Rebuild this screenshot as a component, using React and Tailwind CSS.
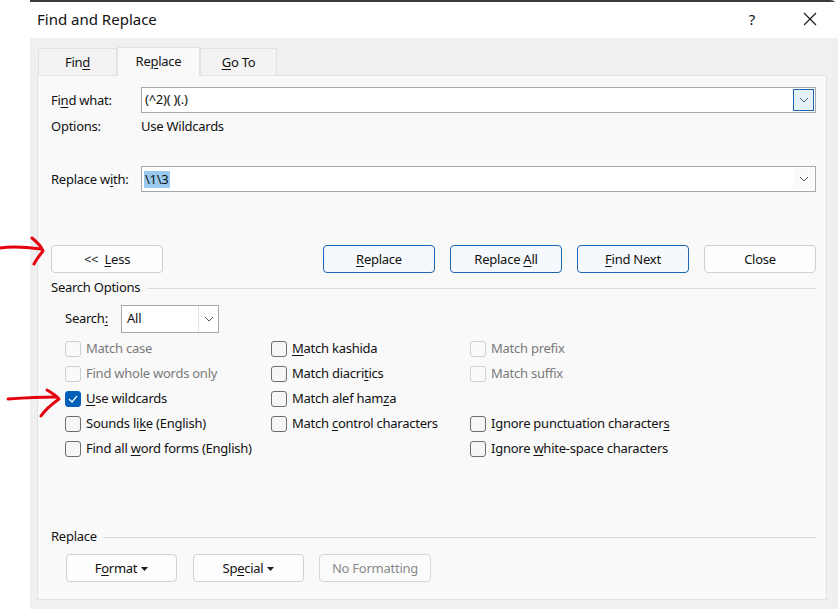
import React from 'react';

const U = ({ children }) => <span className="underline underline-offset-[2px] decoration-1">{children}</span>;

const Chevron = ({ className = '' }) => (
  <svg width="10" height="6" viewBox="0 0 10 6" className={className}>
    <path d="M1 1l4 4 4-4" stroke="#555" strokeWidth="1" fill="none" />
  </svg>
);

const Caret = () => (
  <svg width="7" height="4" viewBox="0 0 7 4" className="ml-[4px]">
    <path d="M0 0h7L3.5 4z" fill="#1a1a1a" />
  </svg>
);

const Btn = ({ children, w = 'w-[112px]', primary, disabled }) => (
  <button
    className={
      'h-[28px] rounded-[4px] border flex items-center justify-center pt-[2px] ' +
      w +
      (primary
        ? ' border-[#1a67b4] bg-[#f5f9fd] text-[#111]'
        : disabled
        ? ' border-[#d6d6d6] bg-[#fbfbfb] text-[#8a8a8a]'
        : ' border-[#d0d0d0] bg-[#fdfdfd] text-[#111]')
    }
  >
    <span className="flex items-center whitespace-pre">{children}</span>
  </button>
);

const Check = ({ children, checked, disabled }) => (
  <div className="h-[25px] flex items-center">
    <div
      className={
        'w-[16px] h-[16px] rounded-[3px] flex items-center justify-center mr-[5px] ' +
        (checked
          ? 'bg-[#005fb8] border border-[#005fb8]'
          : disabled
          ? 'border border-[#cfcfcf] bg-[#fafafa]'
          : 'border border-[#6e6e6e] bg-[#f6f6f6]')
      }
    >
      {checked && (
        <svg width="10" height="8" viewBox="0 0 10 8">
          <path d="M1 4l3 3 5-6" stroke="#fff" strokeWidth="1.2" fill="none" />
        </svg>
      )}
    </div>
    <span className={disabled ? 'text-[#7a7a7a]' : 'text-[#111]'}>{children}</span>
  </div>
);

export default function App() {
  return (
    <div
      className="w-[838px] h-[609px] bg-white relative overflow-hidden flex flex-col text-[13px] tracking-[-0.25px] text-[#111]"
      style={{ fontFamily: '"Noto Sans", "Open Sans", sans-serif' }}
    >
      <div className="ml-[30px] flex-1 flex flex-col border-t-2 border-[#3a3a3a] rounded-tr-[8px]">
        {/* title bar */}
        <div className="h-[36px] bg-white flex items-center pl-[7px] pb-[2px]">
          <span className="text-[15px] tracking-normal">Find and Replace</span>
          <span className="ml-auto text-[15px] mr-[48px]">?</span>
          <svg width="14" height="14" viewBox="0 0 14 14" className="mr-[21px]">
            <path d="M1 1l12 12M13 1L1 13" stroke="#1a1a1a" strokeWidth="1.2" />
          </svg>
        </div>

        {/* body */}
        <div className="flex-1 bg-[#f0f0f0] pl-[7px] pt-[9px]">
          <div className="flex items-end h-[28px] pl-[1px]">
            <div className="w-[79px] h-[27px] border border-b-0 border-[#e2e2e2] bg-[#f3f3f3] flex items-center justify-center pt-[2px]">
              <span>Fin<U>d</U></span>
            </div>
            <div className="w-[83px] h-[29px] -mb-[1px] border border-b-0 border-[#e2e2e2] bg-[#f9f9f9] flex items-center justify-center relative z-10">
              <span>Re<U>p</U>lace</span>
            </div>
            <div className="w-[77px] h-[27px] border border-b-0 border-[#e2e2e2] bg-[#f3f3f3] flex items-center justify-center pt-[2px]">
              <span><U>G</U>o To</span>
            </div>
          </div>

          <div className="w-[790px] h-[525px] border border-[#e2e2e2] bg-[#f9f9f9] pl-[13px] flex flex-col">
            {/* Find what */}
            <div className="flex items-center mt-[11px]">
              <div className="w-[90px] pt-[1px]">Fi<U>n</U>d what:</div>
              <div className="w-[675px] h-[26px] border border-[#a8a8a8] bg-white flex items-center pl-[3px]">
                <span>(^2)( )(.)</span>
                <div className="ml-auto mr-[1px] w-[21px] h-[22px] border border-[#1a67b4] bg-[#e5f1fb] flex items-center justify-center">
                  <Chevron />
                </div>
              </div>
            </div>
            <div className="flex items-center h-[18px] mt-[5px]">
              <div className="w-[90px]">Options:</div>
              <div>Use Wildcards</div>
            </div>

            {/* Replace with */}
            <div className="flex items-center mt-[30px]">
              <div className="w-[90px] pt-[1px]">
                Replace w<U>i</U>th:
              </div>
              <div className="w-[675px] h-[26px] border border-[#a8a8a8] bg-white flex items-center pl-[2px]">
                <span className="bg-[#99c9ef] px-[1px] leading-[17px]">\1\3</span>
                <div className="ml-auto mr-[1px] w-[21px] h-[22px] bg-[#fafafa] flex items-center justify-center">
                  <Chevron />
                </div>
              </div>
            </div>

            {/* buttons */}
            <div className="flex mt-[53px] pr-[10px]">
              <Btn>
                {'<<  '}<U>L</U>ess
              </Btn>
              <div className="ml-auto flex gap-[15px]">
                <Btn primary>
                  <U>R</U>eplace
                </Btn>
                <Btn primary>
                  {'Replace '}<U>A</U>ll
                </Btn>
                <Btn primary>
                  <U>F</U>ind Next
                </Btn>
                <Btn>Close</Btn>
              </div>
            </div>

            {/* Search options */}
            <div className="flex items-center h-[18px] mt-[6px] pr-[10px]">
              <span>Search Options</span>
              <div className="flex-1 border-t border-[#dcdcdc] ml-[7px]" />
            </div>

            <div className="pl-[14px] flex items-center mt-[8px]">
              <div className="w-[56px]">
                Search<U>:</U>
              </div>
              <div className="w-[98px] h-[28px] border border-[#a8a8a8] bg-white flex items-center">
                <span className="pl-[5px]">All</span>
                <div className="ml-auto w-[20px] h-full border-l border-[#e3e3e3] flex items-center justify-center">
                  <Chevron />
                </div>
              </div>
            </div>

            <div className="pl-[14px] mt-[3px] flex">
              <div className="w-[206px]">
                <Check disabled>Match case</Check>
                <Check disabled>Find whole words only</Check>
                <Check checked>
                  <U>U</U>se wildcards
                </Check>
                <Check>
                  Sounds li<U>k</U>e (English)
                </Check>
                <Check>
                  Find all <U>w</U>ord forms (English)
                </Check>
              </div>
              <div className="w-[199px]">
                <Check>
                  <U>M</U>atch kashida
                </Check>
                <Check>
                  Match diacri<U>t</U>ics
                </Check>
                <Check>
                  Match alef ham<U>z</U>a
                </Check>
                <Check>
                  Match <U>c</U>ontrol characters
                </Check>
              </div>
              <div>
                <Check disabled>Match prefix</Check>
                <Check disabled>Match suffix</Check>
                <div className="h-[25px]" />
                <Check>
                  Ignore punctuation character<U>s</U>
                </Check>
                <Check>
                  Ignore <U>w</U>hite-space characters
                </Check>
              </div>
            </div>

            {/* Replace group */}
            <div className="flex items-center h-[18px] mt-[67px] pr-[10px]">
              <span>Replace</span>
              <div className="flex-1 border-t border-[#dcdcdc] ml-[6px]" />
            </div>
            <div className="pl-[15px] mt-[8px] flex">
              <Btn w="w-[111px]">
                F<U>o</U>rmat
                <Caret />
              </Btn>
              <div className="ml-[16px]">
                <Btn w="w-[111px]">
                  Sp<U>e</U>cial
                  <Caret />
                </Btn>
              </div>
              <div className="ml-[15px]">
                <Btn disabled>No Formatting</Btn>
              </div>
            </div>
          </div>
        </div>
      </div>

      {/* red annotation arrows */}
      <svg className="absolute left-0 top-0 pointer-events-none" width="838" height="609" viewBox="0 0 838 609">
        <g stroke="#e4000f" strokeWidth="3" fill="none" strokeLinecap="round" strokeLinejoin="round">
          <path d="M0 248 C 12 246, 26 247, 41 249" />
          <path d="M32 238 C 37 242, 41 246, 43 251 C 39 256, 36 260, 34 264" />
          <path d="M8 399 C 22 398, 40 397, 56 397" />
          <path d="M47 390 C 52 393, 57 396, 59 399 C 52 404, 45 410, 41 416" />
        </g>
      </svg>
    </div>
  );
}
